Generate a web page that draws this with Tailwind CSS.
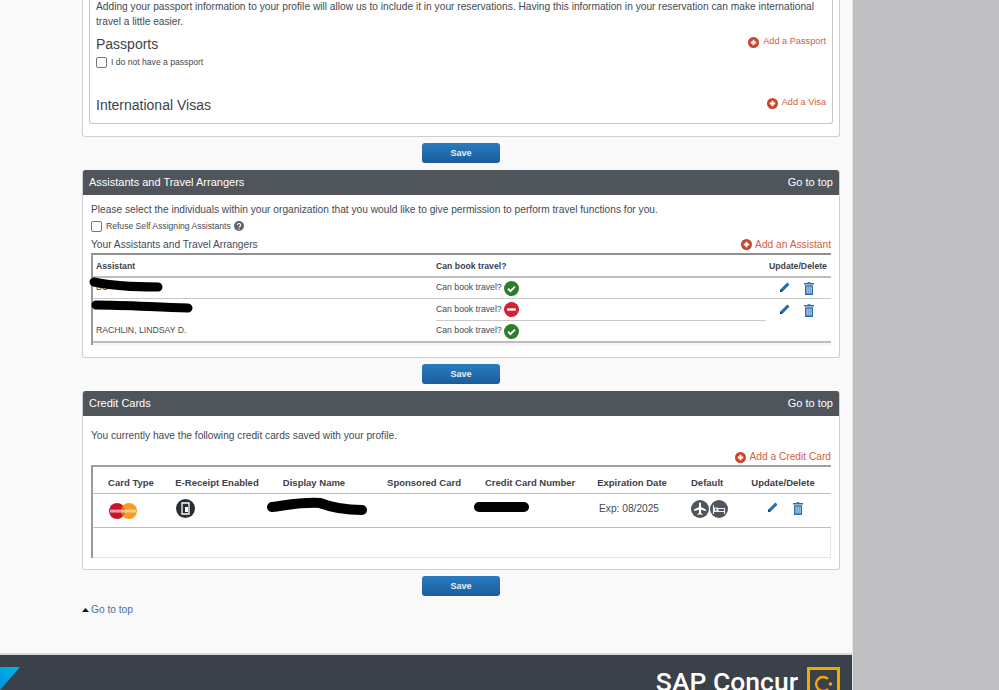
<!DOCTYPE html>
<html><head><meta charset="utf-8"><script src="https://cdn.jsdelivr.net/npm/@tailwindcss/browser@4"></script></head>
<body class="m-0">
<div class="flex h-[690px] w-[999px] overflow-hidden bg-[#c0c0c2] [font-family:'Liberation_Sans',Arial,sans-serif] text-[#434a54]">
<svg class="hidden"><defs>
<symbol id="plus" viewBox="0 0 12 12"><circle cx="6" cy="6" r="6" fill="#c8452b"/><path d="M6 3v6M3 6h6" stroke="#fff" stroke-width="2"/></symbol>
<symbol id="pen" viewBox="0 0 12 12"><path d="M1 11l.7-3L8.500 1.200a1 1 0 0 1 1.400 0l.9.9a1 1 0 0 1 0 1.400L4 10.300z" fill="#1f6fb5"/><path d="M1 11l.7-3 2.300 2.300z" fill="#0d3c66"/></symbol>
<symbol id="trash" viewBox="0 0 10 13"><path d="M3.500 1V.3h3V1H10v1.500H0V1z" fill="#2b6cb0"/><path d="M1 3.200h8V13H1zM2.600 4.500v7h.9v-7zM4.600 4.500v7h.9v-7zM6.600 4.500v7h.9v-7z" fill="#2b6cb0" fill-rule="evenodd"/></symbol>
<symbol id="ok" viewBox="0 0 14 14"><circle cx="7" cy="7" r="7" fill="#2f7d2c"/><path d="M3.800 7.200l2.200 2.200 4.200-4.200" stroke="#fff" stroke-width="1.800" fill="none"/></symbol>
</defs></svg>

<div class="flex w-[853px] shrink-0 flex-col border-r border-r-[#e4e4e4] bg-[#f9f9f9]">
  <div class="h-[653px] shrink-0 pl-[82px]">
    <section class="h-[137px] w-[758px] rounded-b-[3px] border border-t-0 border-[#cfcfcf] bg-white px-[6px]">
      <div class="relative flex h-[124px] flex-col rounded-b-[3px] border border-t-0 border-[#c6c6c6] px-[6px]">
        <p class="-mt-px w-[730px] text-[10.200px] leading-[15px]">Adding your passport information to your profile will allow us to include it in your reservations. Having this information in your reservation can make international travel a little easier.</p>
        <div class="mt-[3px] flex items-start justify-between">
          <div>
            <h3 class="text-[14px] leading-[24px] text-[#3d434b]">Passports</h3>
            <label class="flex items-center gap-[4px] text-[8.600px] leading-[12px]"><span class="h-[11px] w-[11px] rounded-[2px] border border-[#767676] bg-white"></span>I do not have a passport</label>
          </div>
          <a class="mt-[2px] flex items-center gap-[4px] text-[9.200px] leading-[14px] text-[#d2603f]"><svg class="mt-[2px] h-[11px] w-[11px]"><use href="#plus"/></svg>Add a Passport</a>
        </div>
        <div class="mt-[25px] flex items-start justify-between">
          <h3 class="text-[14px] leading-[24px] text-[#3d434b]">International Visas</h3>
          <a class="mt-[2px] flex items-center gap-[4px] text-[9.200px] leading-[14px] text-[#d2603f]"><svg class="mt-[2px] h-[11px] w-[11px]"><use href="#plus"/></svg>Add a Visa</a>
        </div>
      </div>
    </section>
    <div class="flex h-[33px] w-[758px] items-center justify-center">
      <button class="mt-[-1px] h-[20px] w-[78px] rounded-[3px] bg-gradient-to-b from-[#2a7cc0] to-[#1a5d9c] pt-px text-[9px] font-bold text-white/90">Save</button>
    </div>

    <section class="h-[188px] w-[758px] overflow-hidden rounded-[3px] border border-t-0 border-[#cfcfcf] bg-white">
      <header class="-mx-px flex h-[25px] items-center justify-between rounded-t-[3px] bg-[#50555c] px-[7px] text-[11px] text-white"><span>Assistants and Travel Arrangers</span><span>Go to top</span></header>
      <div class="relative px-[8px]">
        <p class="pt-[8px] text-[10.200px] leading-[14px]">Please select the individuals within your organization that you would like to give permission to perform travel functions for you.</p>
        <label class="mt-[3px] flex h-[12px] items-center gap-[4px] text-[8.600px]"><span class="h-[11px] w-[11px] rounded-[2px] border border-[#767676] bg-white"></span>Refuse Self Assigning Assistants
          <svg class="-ml-[1px] h-[10px] w-[10px]" viewBox="0 0 10 10"><circle cx="5" cy="5" r="5" fill="#5f656c"/><path d="M3.400 4a1.600 1.500 0 1 1 2.300 1.400C5.200 5.700 5 6 5 6.500" stroke="#fff" stroke-width="1.100" fill="none"/><circle cx="5" cy="8" r=".7" fill="#fff"/></svg></label>
        <div class="mt-[5px] flex h-[15px] items-center justify-between text-[10.200px]"><span>Your Assistants and Travel Arrangers</span>
          <a class="flex items-center gap-[3px] text-[#d2603f]"><svg class="h-[11px] w-[11px]"><use href="#plus"/></svg>Add an Assistant</a></div>
        <div class="mt-px h-[92px] w-[740px] border-t-2 border-l-2 border-t-[#8f8f8f] border-l-[#9a9a9a] text-[8.700px]">
          <div class="grid h-[23px] grid-cols-[340px_1fr_62px] items-center border-b-2 border-b-[#bdbdbd] pt-[2px] pl-[3px] font-bold text-[#3b4149]"><span>Assistant</span><span>Can book travel?</span><span>Update/Delete</span></div>
          <div class="grid h-[21px] grid-cols-[340px_1fr_65px] items-center border-b border-b-[#c9c9c9] pl-[3px]"><span>BO</span><span class="flex items-center gap-[2px]">Can book travel?<svg class="h-[15px] w-[15px]"><use href="#ok"/></svg></span><span class="flex gap-[14px] pl-[13px]"><svg class="h-[11px] w-[11px]"><use href="#pen"/></svg><svg class="h-[13px] w-[10px]"><use href="#trash"/></svg></span></div>
          <div class="grid h-[22px] grid-cols-[340px_1fr_65px] items-center pl-[3px]"><span></span><span class="flex h-[22px] items-center gap-[2px] border-b border-b-[#c9c9c9]">Can book travel?<svg class="h-[15px] w-[15px]" viewBox="0 0 14 14"><circle cx="7" cy="7" r="7" fill="#cf2336"/><path d="M3 7h8" stroke="#fff" stroke-width="2.200"/></svg></span><span class="flex gap-[14px] pl-[13px]"><svg class="h-[11px] w-[11px]"><use href="#pen"/></svg><svg class="h-[13px] w-[10px]"><use href="#trash"/></svg></span></div>
          <div class="grid h-[22px] grid-cols-[340px_1fr_65px] items-center border-b-2 border-b-[#bdbdbd] pl-[3px]"><span>RACHLIN, LINDSAY D.</span><span class="flex items-center gap-[2px]">Can book travel?<svg class="h-[15px] w-[15px]"><use href="#ok"/></svg></span><span></span></div>
          <div class="h-[3px] bg-[#f5f5f5]"></div>
        </div>
        <svg class="absolute top-[80px] left-0 h-[40px] w-[120px]" viewBox="0 0 120 40"><path d="M11 7C30 11 50 12 75 12M13 30C40 30 70 32 105 33" stroke="#000" stroke-width="9" stroke-linecap="round" fill="none"/></svg>
      </div>
    </section>
    <div class="flex h-[33px] w-[758px] items-center justify-center">
      <button class="mt-[-1px] h-[20px] w-[78px] rounded-[3px] bg-gradient-to-b from-[#2a7cc0] to-[#1a5d9c] pt-px text-[9px] font-bold text-white/90">Save</button>
    </div>

    <section class="h-[179px] w-[758px] overflow-hidden rounded-[3px] border border-t-0 border-[#cfcfcf] bg-white">
      <header class="-mx-px flex h-[25px] items-center justify-between rounded-t-[3px] bg-[#50555c] px-[7px] text-[11px] text-white"><span>Credit Cards</span><span>Go to top</span></header>
      <div class="relative px-[8px]">
        <p class="pt-[13px] text-[10.200px] leading-[14px]">You currently have the following credit cards saved with your profile.</p>
        <div class="mt-[7px] flex h-[14px] items-center justify-end text-[10.200px]"><a class="flex items-center gap-[3px] text-[#d2603f]"><svg class="h-[11px] w-[11px]"><use href="#plus"/></svg>Add a Credit Card</a></div>
        <div class="mt-px h-[93px] w-[740px] border-t-2 border-l-2 border-t-[#a0a0a0] border-l-[#9a9a9a] text-[9.500px]">
          <div class="h-[27px] border-b border-b-[#bdbdbd] pt-[6px] font-bold text-[#3b4149]">
            <div class="grid h-full grid-cols-[76px_96px_98px_122px_88px_118px_32px_108px] items-center text-center whitespace-nowrap"><span>Card Type</span><span>E-Receipt Enabled</span><span>Display Name</span><span>Sponsored Card</span><span>Credit Card Number</span><span>Expiration Date</span><span>Default</span><span class="pl-[12px]">Update/Delete</span></div>
          </div>
          <div class="grid h-[34px] grid-cols-[76px_96px_98px_122px_88px_118px_32px_108px] items-center border-b border-b-[#bdbdbd] pb-[4px]">
            <span class="flex justify-center pt-[5px] pr-[16px]"><svg class="h-[16px] w-[28px]" viewBox="0 0 28 16"><circle cx="8" cy="8" r="8" fill="#cc1424"/><circle cx="20" cy="8" r="8" fill="#f79c1b"/><path d="M14 2.800a8 8 0 0 1 0 10.400 8 8 0 0 1 0-10.400" fill="#e4651f"/><rect x="1" y="6.600" width="26" height="3" fill="#f3d9d5" opacity=".7"/></svg></span>
            <span class="flex pl-[7px]"><svg class="h-[19px] w-[19px]" viewBox="0 0 19 19"><circle cx="9.500" cy="9.500" r="9.500" fill="#2a2d31"/><path d="M6 4h7v11H6z" fill="none" stroke="#fff" stroke-width="1.300"/><path d="M9 8h3v5H9z" fill="#fff"/></svg></span>
            <span></span><span></span><span></span>
            <span class="pl-[26px] text-[10.200px] whitespace-nowrap">Exp: 08/2025</span>
            <span class="flex gap-[1px]"><svg class="h-[18px] w-[18px] shrink-0" viewBox="0 0 18 18"><circle cx="9" cy="9" r="9" fill="#50555c"/><path d="M8 3.500a1 1 0 0 1 2 0V7l5 2.500V11L10 9.800V13l1.500 1v1L9 14.300 6.500 15v-1L8 13V9.800L3 11V9.500L8 7z" fill="#fff"/></svg><svg class="h-[18px] w-[18px] shrink-0" viewBox="0 0 18 18"><circle cx="9" cy="9" r="9" fill="#50555c"/><path d="M3.500 5v9M3.500 11.500h11V14M4.500 8h2.500v3H4.500zM8 8.500h6.500v3H8z" stroke="#e8eef2" stroke-width="1.100" fill="none"/></svg></span>
            <span class="flex gap-[15px] pl-[44px]"><svg class="h-[11px] w-[11px]"><use href="#pen"/></svg><svg class="h-[13px] w-[10px]"><use href="#trash"/></svg></span>
          </div>
          <div class="h-[30px] border-r border-b border-r-[#e5e5e5] border-b-[#e5e5e5]"></div>
        </div>
        <svg class="absolute top-[80px] left-[175px] h-[30px] w-[280px]" viewBox="0 0 280 30"><path d="M14 11C30 9 42 6 62 7 77 13 90 14 104 14" stroke="#000" stroke-width="10" stroke-linecap="round" fill="none"/><path d="M221 11H266" stroke="#000" stroke-width="10" stroke-linecap="round" fill="none"/></svg>
      </div>
    </section>
    <div class="flex h-[33px] w-[758px] items-center justify-center">
      <button class="mt-[-1px] h-[20px] w-[78px] rounded-[3px] bg-gradient-to-b from-[#2a7cc0] to-[#1a5d9c] pt-px text-[9px] font-bold text-white/90">Save</button>
    </div>
    <a class="-mt-[2px] flex h-[18px] items-center gap-[2px] text-[10.200px] text-[#3f73ab]"><svg class="h-[4px] w-[7px]" viewBox="0 0 7 4"><path d="M3.500 0L7 4H0z" fill="#14142b"/></svg>Go to top</a>
  </div>

  <footer class="relative flex-1 border-t-2 border-t-[#d8d8d8] bg-[#3a4149]">
    <svg class="absolute top-[12px] left-0 h-[23px] w-[20px]" viewBox="0 0 20 23"><defs><linearGradient id="blue" x1="0" y1="1" x2="1" y2="0"><stop offset="0" stop-color="#0094d8"/><stop offset="1" stop-color="#00b4f0"/></linearGradient></defs><path d="M0 0H20L0 23z" fill="url(#blue)"/></svg>
    <div class="flex justify-end gap-[9px] pt-[12px] pr-[12px]">
      <span class="[font-family:'Roboto',sans-serif] text-[26.500px] leading-[30px] font-medium whitespace-nowrap text-white">SAP Concur</span>
      <span class="block h-[32px] w-[33px] border-[3px] border-[#f0ab00]"><svg class="h-[27px] w-[27px]" viewBox="0 0 27 27"><path d="M18 9a7 7 0 1 0 0 10" stroke="#f0ab00" stroke-width="2.400" fill="none"/><circle cx="20.500" cy="14" r="1.800" fill="#f0ab00"/></svg></span>
    </div>
  </footer>
</div>
<div class="flex-1 bg-[#c0c0c2]"></div>
</div>
</body></html>
